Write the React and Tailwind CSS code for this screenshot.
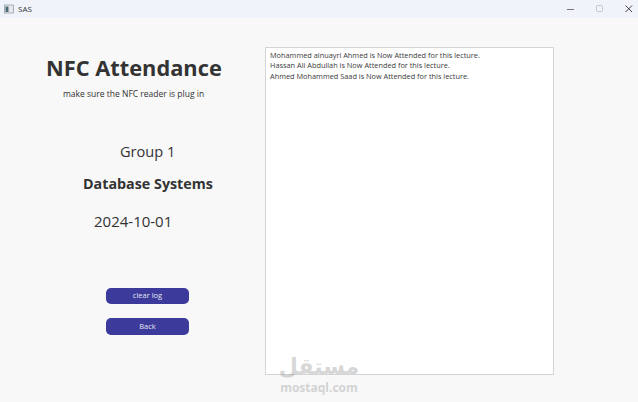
import React from "react";

const FONT = { fontFamily: '"Open Sans", "Noto Sans", sans-serif' };

const logLines = [
  "Mohammed alnuayri Ahmed is Now Attended for this lecture.",
  "Hassan Ali Abdullah is Now Attended for this lecture.",
  "Ahmed Mohammed Saad is Now Attended for this lecture.",
];

const TitleBar = () => (
  <div className="flex h-[18px] items-center justify-between bg-[#f0f3fa]">
    <div className="flex items-center">
      <svg className="ml-[4px] h-[10px] w-[10px]" viewBox="0 0 10 10">
        <rect x="0.5" y="1" width="9" height="8" fill="#e4e8ec" stroke="#8a949c" strokeWidth="0.7" />
        <rect x="1.5" y="2.5" width="3" height="5.5" fill="#4d6a78" />
      </svg>
      <span className="ml-[4px] text-[8px] leading-none text-[#333]">SAS</span>
    </div>
    <div className="flex items-center pr-[4px]">
      <svg className="h-[10px] w-[10px]" viewBox="0 0 10 10">
        <path d="M1 5.5h7" stroke="#777" strokeWidth="1" fill="none" />
      </svg>
      <svg className="ml-[19px] h-[10px] w-[10px]" viewBox="0 0 10 10">
        <rect x="1.5" y="1.5" width="6" height="6" rx="1" stroke="#c2c6d0" strokeWidth="1" fill="none" />
      </svg>
      <svg className="ml-[19px] h-[10px] w-[10px]" viewBox="0 0 10 10">
        <path d="M1.5 1.5l6.5 6.5M8 1.5L1.5 8" stroke="#444" strokeWidth="1" fill="none" />
      </svg>
    </div>
  </div>
);

const LeftPanel = () => (
  <div className="flex w-[265px] shrink-0 flex-col text-[#333]">
    <h1 className="mt-[34px] ml-[46px] text-[21.8px] leading-[32px] font-bold whitespace-nowrap">
      NFC Attendance
    </h1>
    <p className="mt-[2px] ml-[63px] text-[8.5px] leading-[16px] whitespace-nowrap">
      make sure the NFC reader is plug in
    </p>
    <p className="mt-[38px] ml-[120px] text-[14.6px] leading-[22px] whitespace-nowrap">Group 1</p>
    <p className="mt-[11px] ml-[83px] text-[14.3px] leading-[22px] font-bold whitespace-nowrap">
      Database Systems
    </p>
    <p className="mt-[15px] ml-[94px] text-[15px] leading-[22px] whitespace-nowrap">2024-10-01</p>
    <button className="mt-[56px] ml-[106px] h-[16px] w-[83px] rounded-[5px] bg-[#3c3a9b] text-[7.5px] leading-none text-[#e6e6f5]">
      clear log
    </button>
    <button className="mt-[14px] ml-[106px] h-[17px] w-[83px] rounded-[5px] bg-[#3c3a9b] text-[7.5px] leading-none text-[#e6e6f5]">
      Back
    </button>
  </div>
);

const App = () => {
  return (
    <div className="relative flex h-[402px] w-[638px] flex-col overflow-hidden bg-[#f8f8f8]" style={FONT}>
      <TitleBar />
      <div className="flex flex-1">
        <LeftPanel />
        <div className="mt-[29px] h-[328px] w-[289px] border border-[#d4d4d4] bg-white px-[4px] pt-[1.5px]">
          {logLines.map((line) => (
            <p key={line} className="text-[7.35px] leading-[10.7px] whitespace-nowrap text-[#3a3a3a]">
              {line}
            </p>
          ))}
        </div>
      </div>
      {/* mostaql watermark */}
      <div className="absolute top-[355px] left-[280px] flex w-[78px] flex-col items-center text-[#8f8f8f] opacity-35">
        <span className="text-[22px] leading-[23px] font-bold" dir="rtl" style={{ fontFamily: '"DejaVu Sans", sans-serif' }}>
          مستقل
        </span>
        <span className="mt-[3px] text-[12px] leading-[13px] font-bold">mostaql.com</span>
      </div>
    </div>
  );
};

export default App;
